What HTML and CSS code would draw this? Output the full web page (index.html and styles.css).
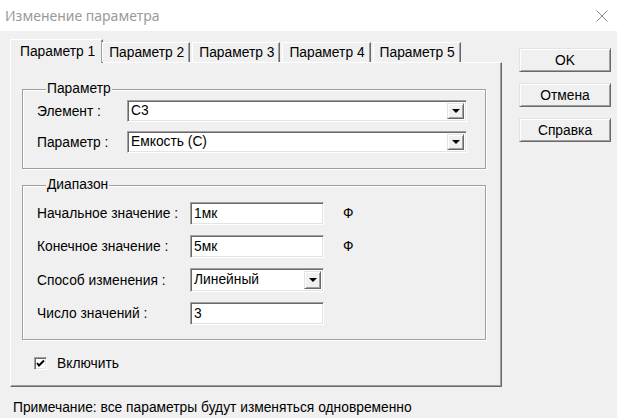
FILE: index.html
```html
<!DOCTYPE html>
<html lang="ru">
<head>
<meta charset="utf-8">
<title>Изменение параметра</title>
<link rel="stylesheet" href="styles.css">
</head>
<body>
<div class="titlebar">
  <span class="title">Изменение параметра</span>
  <svg class="close" width="12" height="12" viewBox="0 0 12 12"><path d="M0.5 0.5 L11.5 11.5 M11.5 0.5 L0.5 11.5" stroke="#8a8a8a" stroke-width="1" fill="none"/></svg>
</div>
<div class="window">
  <div class="tabs-area">
    <div class="tabstrip">
      <div class="tab active">Параметр 1</div>
      <div class="tab">Параметр 2</div>
      <div class="tab">Параметр 3</div>
      <div class="tab">Параметр 4</div>
      <div class="tab">Параметр 5</div>
    </div>
    <div class="panel">
      <fieldset class="group group-param">
        <legend>Параметр</legend>
        <div class="rows rows-param">
          <span class="lbl">Элемент :</span>
          <div class="combo wide"><span class="val">C3</span><span class="arrow"><i></i></span></div>
          <span class="lbl">Параметр :</span>
          <div class="combo wide"><span class="val">Емкость (C)</span><span class="arrow"><i></i></span></div>
        </div>
      </fieldset>
      <fieldset class="group group-range">
        <legend>Диапазон</legend>
        <div class="rows rows-range">
          <span class="lbl">Начальное значение :</span>
          <div class="field"><span class="val">1мк</span></div>
          <span class="unit">Ф</span>
          <span class="lbl">Конечное значение :</span>
          <div class="field"><span class="val">5мк</span></div>
          <span class="unit">Ф</span>
          <span class="lbl">Способ изменения :</span>
          <div class="combo narrow"><span class="val">Линейный</span><span class="arrow"><i></i></span></div>
          <span class="unit"></span>
          <span class="lbl">Число значений :</span>
          <div class="field"><span class="val">3</span></div>
          <span class="unit"></span>
        </div>
      </fieldset>
      <label class="check">
        <span class="box"><svg width="9" height="9" viewBox="0 0 9 9"><path d="M1 4 L3 6.5 L8 1.5" stroke="#000" stroke-width="2" fill="none"/></svg></span>
        <span>Включить</span>
      </label>
    </div>
  </div>
  <div class="buttons">
    <div class="btn">OK</div>
    <div class="btn">Отмена</div>
    <div class="btn">Справка</div>
  </div>
</div>
<div class="note">Примечание: все параметры будут изменяться одновременно</div>
</body>
</html>
```
FILE: styles.css
```css
* { box-sizing: border-box; }
html, body { margin: 0; padding: 0; }
body {
  width: 617px;
  height: 418px;
  background: #f0f0f0;
  font-family: "Liberation Sans", Arial, sans-serif;
  font-size: 13.8px;
  color: #000;
  overflow: hidden;
}
.titlebar {
  height: 31px;
  background: #fff;
  display: flex;
  align-items: center;
  justify-content: space-between;
  padding: 0 9px 0 5px;
}
.title {
  font-family: "Noto Sans", "Open Sans", sans-serif;
  font-size: 14px;
  color: #9a9a9a;
}
.window {
  display: flex;
  align-items: flex-start;
  padding: 8px 0 0 10px;
}
.tabs-area { width: 492px; }
.tabstrip {
  display: flex;
  align-items: flex-end;
  height: 23px;
  padding-left: 2px;
  position: relative;
  z-index: 1;
}
.tab {
  height: 20px;
  line-height: 19px;
  padding: 0 5px 0 6px;
  border-top: 1px solid #fff;
  border-left: 1px solid #fff;
  border-right: 1px solid #696969;
  box-shadow: inset -1px 0 0 #a0a0a0;
  background: #f0f0f0;
  margin-right: 2px;
  white-space: nowrap;
}
.tab.active {
  height: 24px;
  margin: 0 0 -1px -2px;
  padding: 0 7px 0 9px;
  line-height: 23px;
}
.tab.active + .tab { margin-left: -1px; }
.panel {
  height: 325px;
  border-top: 1px solid #fff;
  border-left: 1px solid #fff;
  border-right: 1px solid #696969;
  border-bottom: 1px solid #696969;
  box-shadow: inset -1px -1px 0 #a0a0a0;
  padding: 18px 15px 0 11px;
}
.group {
  margin: 0;
  border: 1px solid #a0a0a0;
  box-shadow: 1px 1px 0 #fff, inset 1px 1px 0 #fff;
  padding: 3px 18px 15px 14px;
  min-width: 0;
}
.group legend {
  padding: 0 1px;
  margin-left: 9px;
  line-height: 16px;
  background: #f0f0f0;
}
.group-range { margin-top: 8px; padding-bottom: 14px; }
.rows { display: grid; align-items: center; }
.rows-param { grid-template-columns: 90px 1fr; row-gap: 9px; }
.rows-range { grid-template-columns: 153px 134px 1fr; row-gap: 10px; padding-top: 6px; }
.lbl { white-space: nowrap; }
.unit { padding-left: 19px; }
.field, .combo {
  height: 23px;
  background: #fff;
  border-top: 1px solid #a0a0a0;
  border-left: 1px solid #a0a0a0;
  border-right: 1px solid #fff;
  border-bottom: 1px solid #fff;
  box-shadow: inset 1px 1px 0 #696969, inset -1px -1px 0 #e3e3e3;
  display: flex;
  align-items: center;
  padding: 2px 2px 2px 3px;
}
.combo.wide { height: 22px; }
.combo.narrow { height: 24px; }
.val { flex: 1; white-space: nowrap; line-height: 16px; }
.arrow {
  width: 17px;
  align-self: stretch;
  background: #f0f0f0;
  border-top: 1px solid #e3e3e3;
  border-left: 1px solid #e3e3e3;
  border-right: 1px solid #696969;
  border-bottom: 1px solid #696969;
  box-shadow: inset 1px 1px 0 #fff, inset -1px -1px 0 #a0a0a0;
  display: flex;
  align-items: center;
  justify-content: center;
}
.arrow i {
  display: block;
  width: 0;
  height: 0;
  border-left: 4px solid transparent;
  border-right: 4px solid transparent;
  border-top: 4px solid #000;
}
.check {
  display: flex;
  align-items: center;
  gap: 10px;
  margin: 16px 0 0 12px;
}
.box {
  width: 13px;
  height: 13px;
  background: #fff;
  border-top: 1px solid #a0a0a0;
  border-left: 1px solid #a0a0a0;
  border-right: 1px solid #fff;
  border-bottom: 1px solid #fff;
  box-shadow: inset 1px 1px 0 #696969, inset -1px -1px 0 #e3e3e3;
  display: flex;
  align-items: center;
  justify-content: center;
}
.box svg { display: block; }
.buttons {
  display: flex;
  flex-direction: column;
  gap: 11px;
  margin: 9px 0 0 17px;
}
.btn {
  width: 92px;
  height: 24px;
  background: #f0f0f0;
  border-top: 1px solid #e3e3e3;
  border-left: 1px solid #e3e3e3;
  border-right: 1px solid #696969;
  border-bottom: 1px solid #696969;
  box-shadow: inset 1px 1px 0 #fff, inset -1px -1px 0 #a0a0a0;
  display: flex;
  align-items: center;
  justify-content: center;
}
.note {
  margin: 13px 0 0 13px;
  line-height: 16px;
}
```
